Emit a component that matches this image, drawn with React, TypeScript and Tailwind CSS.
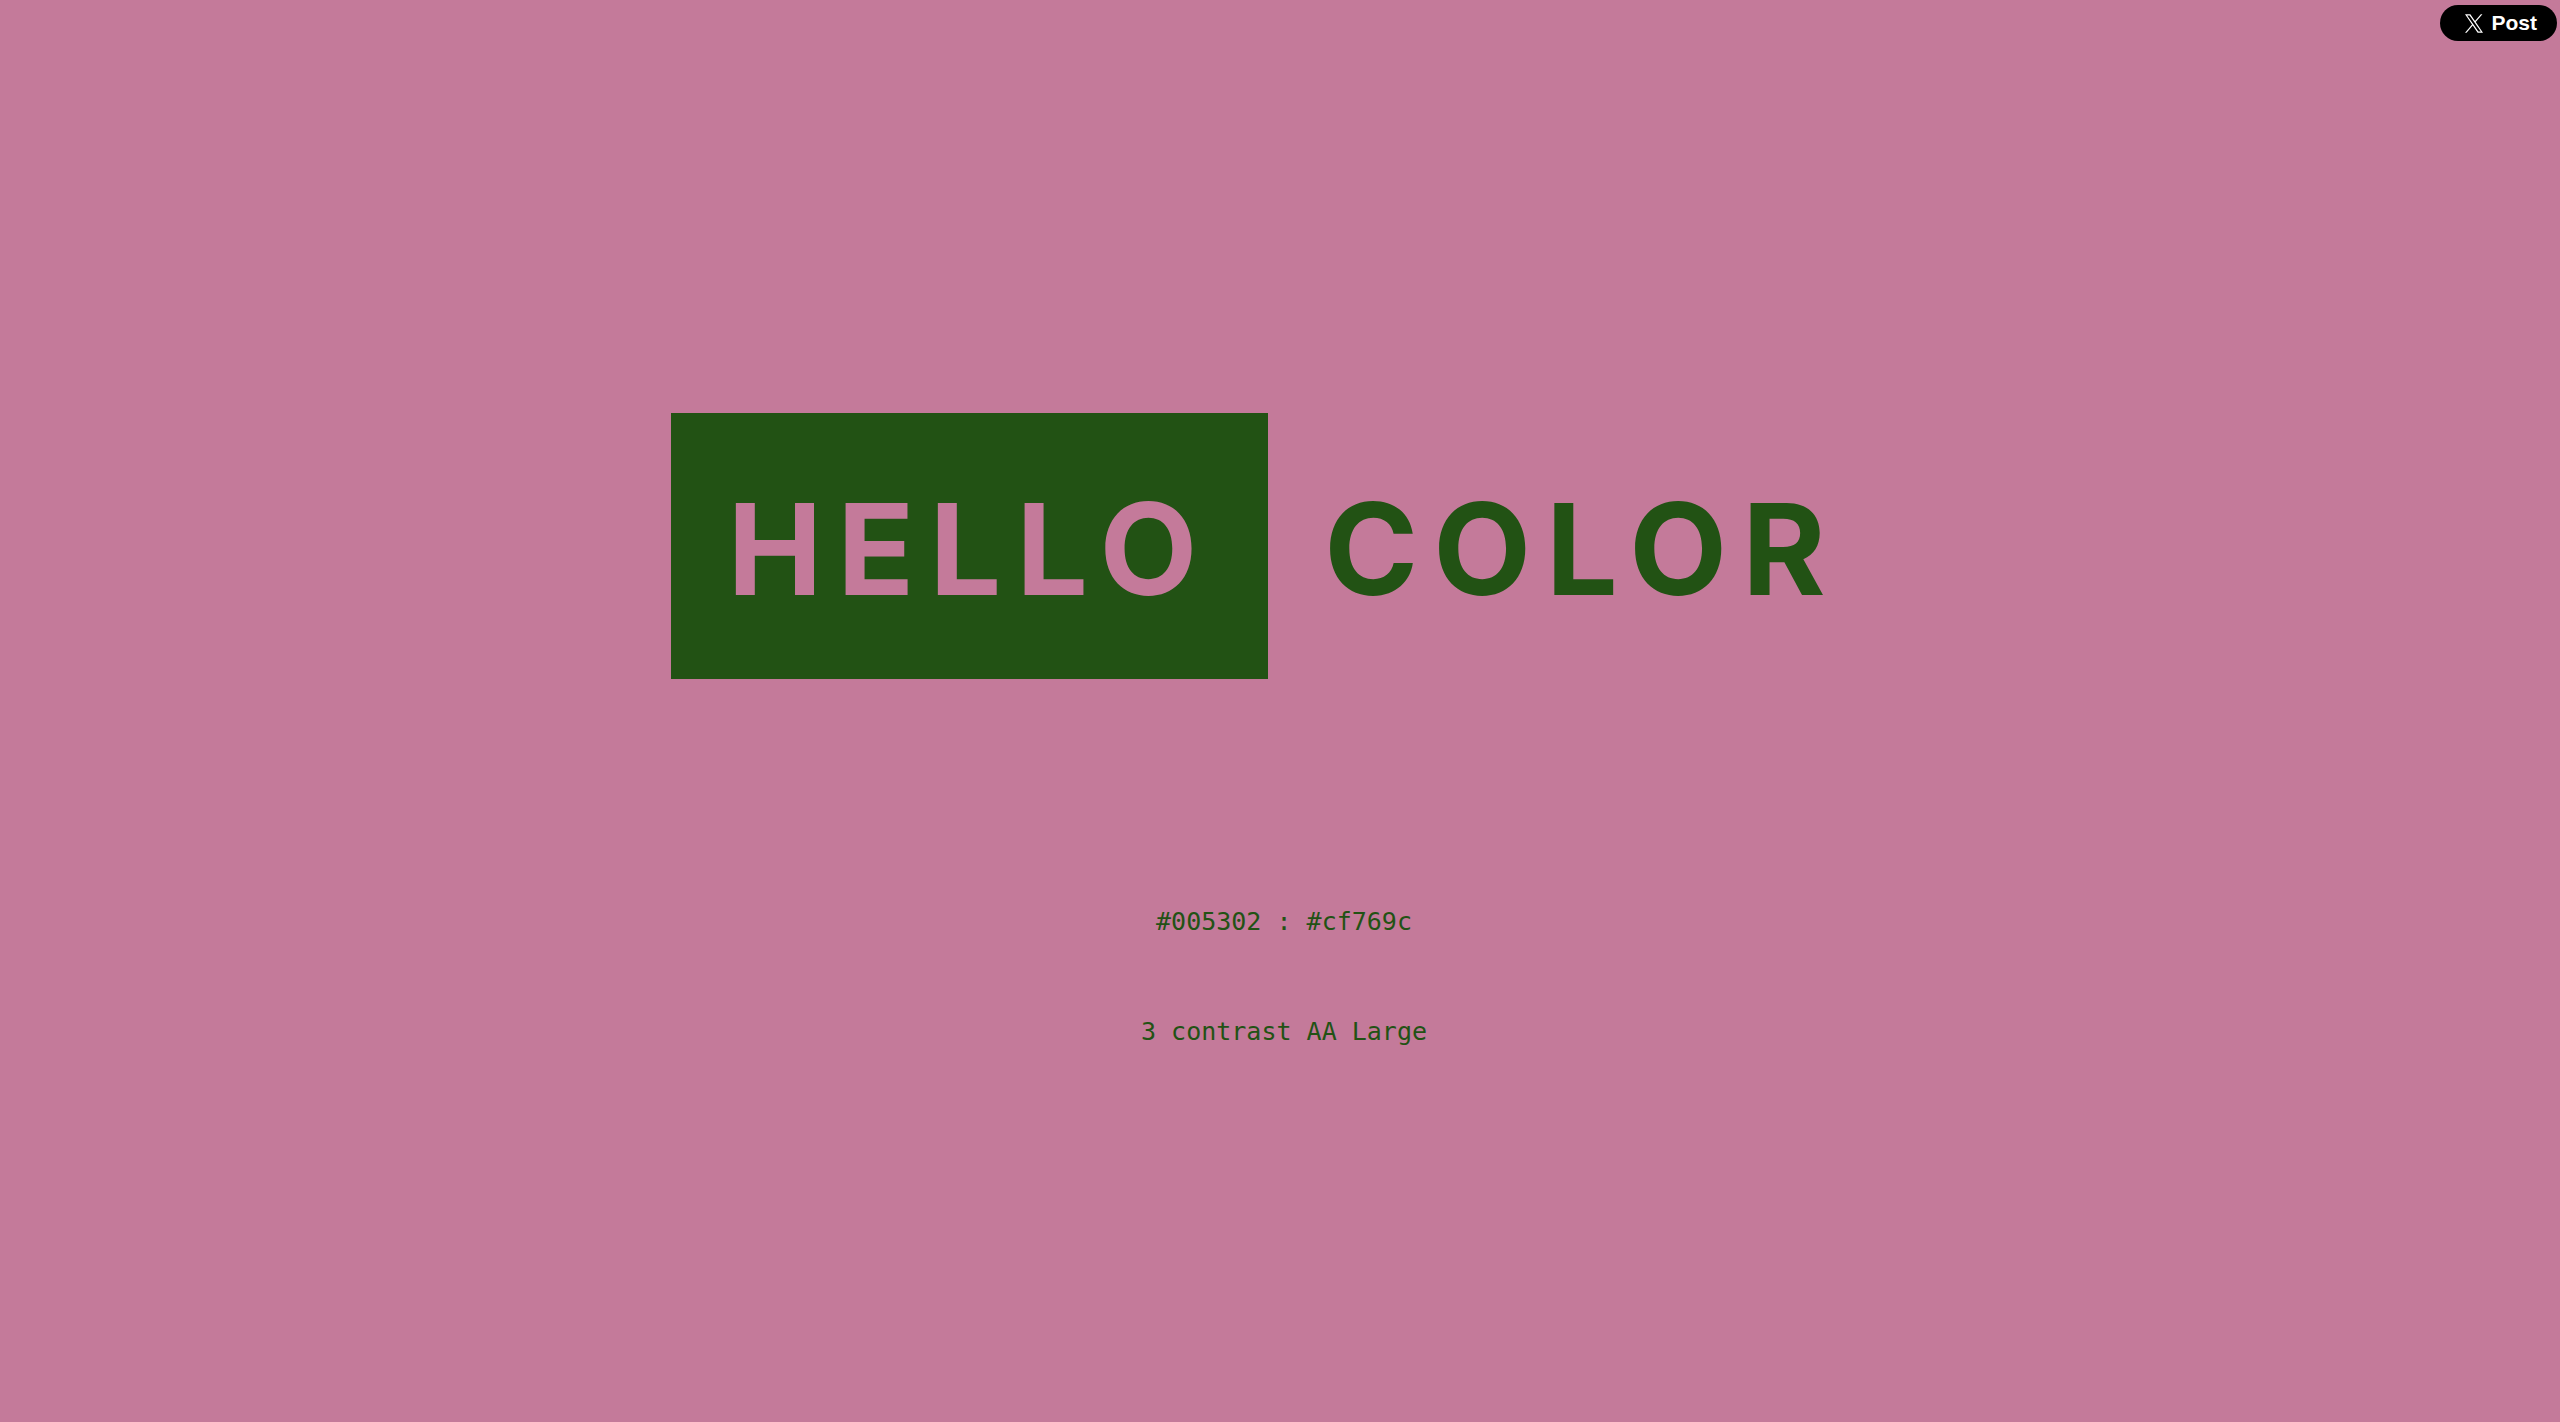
import React from 'react';

interface Pair {
  a: string;
  b: string;
  contrast: number;
  rating: string;
}

const pair: Pair = {
  a: '#005302',
  b: '#cf769c',
  contrast: 3,
  rating: 'AA Large',
};

const XLogo = () => (
  <svg viewBox="0 0 1200 1227" className="h-[19px] w-[18px]" fill="currentColor" aria-hidden="true">
    <path d="M714.163 519.284L1160.89 0H1055.03L667.137 450.887L357.328 0H0L468.492 681.821L0 1226.37H105.866L515.491 750.218L842.672 1226.37H1200L714.137 519.284H714.163ZM569.165 687.828L521.697 619.934L144.011 79.6944H306.615L611.412 515.685L658.88 583.579L1055.08 1150.3H892.476L569.165 687.854V687.828Z" />
  </svg>
);

const PostButton = () => (
  <a
    href="#post"
    className="flex h-9 items-center gap-2 rounded-full bg-black pl-[25px] pr-5 font-['Liberation_Sans',Arial,sans-serif] text-[21px] font-bold leading-6 text-white"
  >
    <XLogo />
    <span>Post</span>
  </a>
);

export default function App() {
  return (
    <div className="relative flex min-h-screen flex-col bg-[#c47a9a] pl-2 text-[#225214]">
      <div className="absolute right-[3px] top-[5px]">
        <PostButton />
      </div>

      <h1 className="mt-[413px] flex justify-center font-['Inter',sans-serif] text-[127px] font-bold leading-[154px] tracking-[15px]">
        <span className="bg-[#225214] px-14 pb-[53px] pt-[59px] text-[#c47a9a]">HELLO</span>
        <span className="px-14 pb-[53px] pt-[59px]">COLOR</span>
      </h1>

      <div className="mt-[228px] flex flex-col items-center gap-20 font-['DejaVu_Sans_Mono',monospace] text-[25px] leading-[30px]">
        <p>{pair.a} : {pair.b}</p>
        <p>{pair.contrast} contrast {pair.rating}</p>
      </div>
    </div>
  );
}
